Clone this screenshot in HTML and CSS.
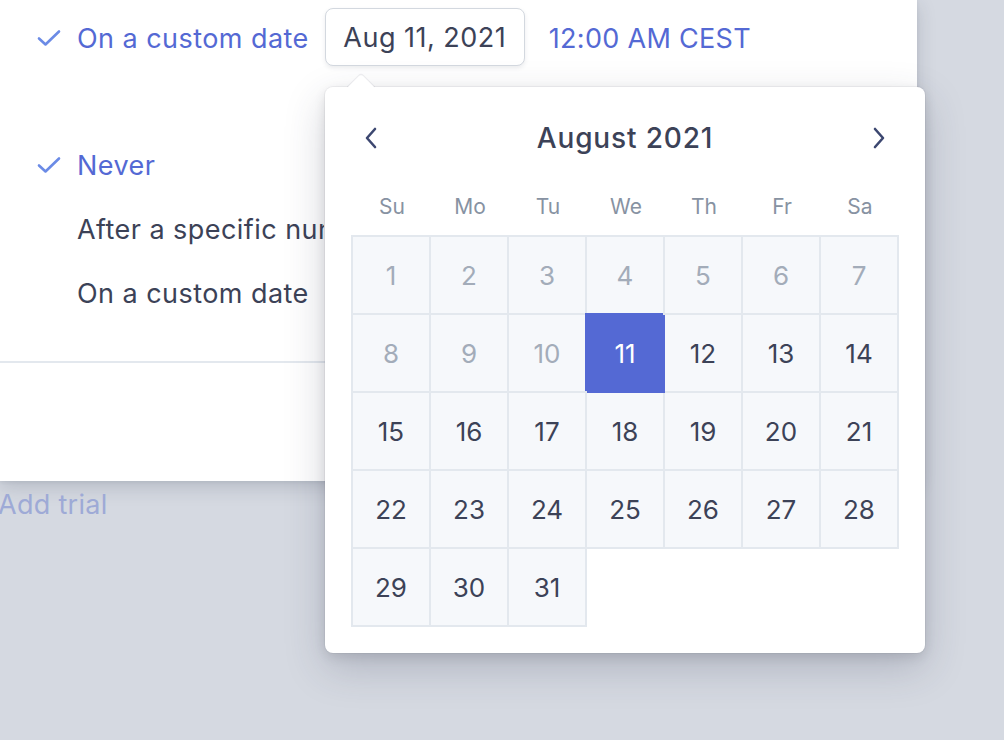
FILE: index.html
```html
<!DOCTYPE html>
<html>
<head>
<meta charset="utf-8">
<link rel="stylesheet" href="styles.css">
</head>
<body>
<div class="stage">
  <div class="panel">
    <div class="row row-top">
      <svg class="check" viewBox="0 0 24 18" width="24" height="18"><path d="M2 9.5 L8.5 15.5 L22 2.5" fill="none" stroke="#6b8be6" stroke-width="2.6" stroke-linecap="round" stroke-linejoin="round"/></svg>
      <span class="label active">On a custom date</span>
      <button class="date-btn">Aug 11, 2021</button>
      <span class="time">12:00 AM CEST</span>
    </div>
    <div class="options">
      <div class="row">
        <svg class="check" viewBox="0 0 24 18" width="24" height="18"><path d="M2 9.5 L8.5 15.5 L22 2.5" fill="none" stroke="#6b8be6" stroke-width="2.6" stroke-linecap="round" stroke-linejoin="round"/></svg>
        <span class="label active">Never</span>
      </div>
      <div class="row"><span class="check-space"></span><span class="label clipped">After a specific number of days</span></div>
      <div class="row"><span class="check-space"></span><span class="label">On a custom date</span></div>
    </div>
    <div class="divider"></div>
  </div>
  <div class="add-trial">Add trial</div>

  <div class="popover">
    <div class="arrow"></div>
    <div class="cal-head">
      <svg class="nav" viewBox="0 0 14 22" width="14" height="22"><path d="M11 2 L3 11 L11 20" fill="none" stroke="#3c4770" stroke-width="2.6" stroke-linecap="round" stroke-linejoin="round"/></svg>
      <span class="month">August 2021</span>
      <svg class="nav" viewBox="0 0 14 22" width="14" height="22"><path d="M3 2 L11 11 L3 20" fill="none" stroke="#3c4770" stroke-width="2.6" stroke-linecap="round" stroke-linejoin="round"/></svg>
    </div>
    <div class="weekdays">
      <span>Su</span><span>Mo</span><span>Tu</span><span>We</span><span>Th</span><span>Fr</span><span>Sa</span>
    </div>
    <div class="grid">
      <div class="day off">1</div><div class="day off">2</div><div class="day off">3</div><div class="day off">4</div><div class="day off">5</div><div class="day off">6</div><div class="day off">7</div>
      <div class="day off">8</div><div class="day off">9</div><div class="day off">10</div><div class="day sel">11</div><div class="day">12</div><div class="day">13</div><div class="day">14</div>
      <div class="day">15</div><div class="day">16</div><div class="day">17</div><div class="day">18</div><div class="day">19</div><div class="day">20</div><div class="day">21</div>
      <div class="day">22</div><div class="day">23</div><div class="day">24</div><div class="day">25</div><div class="day">26</div><div class="day">27</div><div class="day">28</div>
      <div class="day">29</div><div class="day">30</div><div class="day">31</div>
    </div>
  </div>
</div>
</body>
</html>
```
FILE: styles.css
```css
* { box-sizing: border-box; }
html, body { margin: 0; padding: 0; }
body {
  background: #d5d9e1;
  font-family: "Inter", "Noto Sans", sans-serif;
  width: 1004px;
  height: 740px;
  overflow: hidden;
}
.stage { position: relative; width: 1004px; height: 740px; }
.panel {
  width: 917px;
  height: 481px;
  background: #fff;
  box-shadow: 0 6px 18px rgba(40, 48, 70, 0.18), 0 1px 4px rgba(40, 48, 70, 0.08);
  display: flex;
  flex-direction: column;
}
.row {
  display: flex;
  align-items: center;
  padding-left: 37px;
  height: 64px;
}
.row-top { height: 58px; margin-top: 9px; }
.check { flex: none; margin-right: 16px; }
.check-space { width: 24px; margin-right: 16px; flex: none; }
.label {
  font-size: 27px;
  color: #3c4257;
  white-space: nowrap;
  letter-spacing: 0.45px;
}
.label.clipped {
  max-width: 247px;
  overflow: hidden;
}
.label.active { color: #5469d4; }
.date-btn {
  margin-left: 16px;
  height: 58px;
  width: 200px;
  margin-top: -2px;
  background: #fff;
  border: 1px solid #d3d8df;
  border-radius: 8px;
  box-shadow: 0 2px 4px rgba(60, 66, 87, 0.10);
  font-family: inherit;
  font-size: 27px;
  letter-spacing: 0.5px;
  color: #3c4257;
  padding: 0;
}
.time {
  margin-left: 24px;
  font-size: 27px;
  letter-spacing: 0.3px;
  color: #5469d4;
}
.options { margin-top: 66px; }
.options .row { height: 64px; }
.divider {
  margin-top: 36px;
  height: 2px;
  background: #e3e8ee;
}
.add-trial {
  margin-left: -2px;
  margin-top: 8px;
  font-size: 27px;
  letter-spacing: 0.3px;
  line-height: 32px;
  color: #9eaad6;
}
.popover {
  position: absolute;
  left: 325px;
  top: 87px;
  width: 600px;
  height: 566px;
  background: #fff;
  border-radius: 8px;
  box-shadow: 0 15px 40px rgba(50, 55, 80, 0.22), 0 4px 12px rgba(0, 0, 0, 0.10), 0 0 0 1px rgba(60, 66, 87, 0.06);
  padding: 26px 26px 0 26px;
}
.arrow {
  position: absolute;
  left: 26px;
  top: -9px;
  width: 20px;
  height: 20px;
  background: #fff;
  transform: rotate(45deg);
  border-radius: 4px 0 0 0;
  box-shadow: -1px -1px 0 rgba(60, 66, 87, 0.08);
}
.cal-head {
  display: flex;
  align-items: center;
  justify-content: space-between;
  height: 50px;
  padding: 0 13px;
}
.month {
  font-size: 28px;
  font-weight: 500;
  letter-spacing: 0.85px;
  color: #3c4257;
}
.weekdays {
  display: grid;
  grid-template-columns: repeat(7, 78px);
  padding-left: 2px;
  margin-top: 15px;
  height: 56px;
  align-items: center;
}
.weekdays span {
  text-align: center;
  font-size: 21px;
  color: #8792a2;
}
.grid {
  display: grid;
  grid-template-columns: repeat(7, 78px);
  grid-auto-rows: 78px;
  width: 548px;
  border-left: 2px solid #e3e8ee;
  border-top: 2px solid #e3e8ee;
  margin-top: 1px;
}
.day {
  border-right: 2px solid #e3e8ee;
  border-bottom: 2px solid #e3e8ee;
  background: #f6f8fb;
  display: flex;
  align-items: center;
  justify-content: center;
  font-size: 26px;
  color: #3c4257;
}
.day.off { color: #a3acb9; }
.day.sel {
  background: #5469d4;
  border-color: #5469d4;
  box-shadow: -2px -2px 0 0 #5469d4;
  color: #fff;
}
```
